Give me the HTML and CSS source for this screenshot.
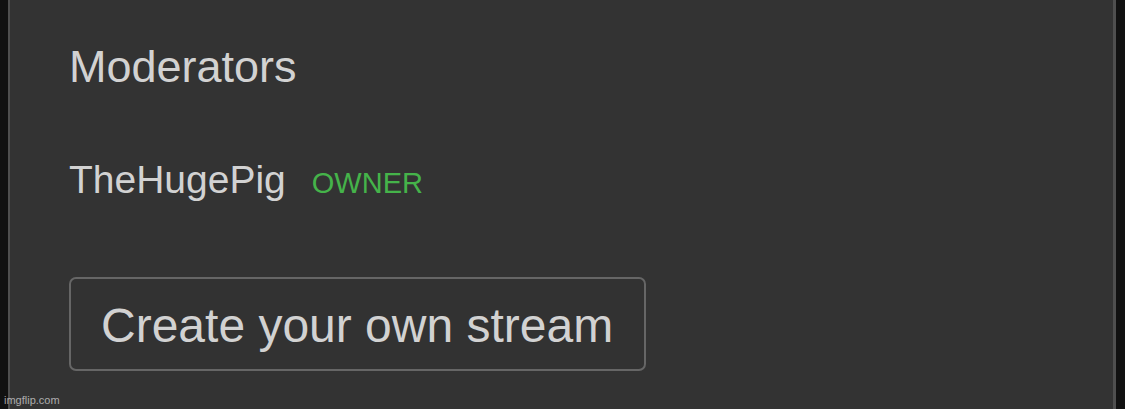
FILE: index.html
```html
<!DOCTYPE html>
<html lang="en">
<head>
<meta charset="utf-8">
<title>Moderators</title>
<link rel="stylesheet" href="styles.css">
</head>
<body>
<div class="frame">
  <section class="panel">
    <h2 class="title">Moderators</h2>
    <div class="mod-row">
      <span class="mod-name">TheHugePig</span>
      <span class="mod-role">OWNER</span>
    </div>
    <button class="create-btn" type="button">Create your own stream</button>
  </section>
</div>
<div class="watermark">imgflip.com</div>
</body>
</html>
```

FILE: styles.css
```css
html, body {
  margin: 0;
  padding: 0;
}
body {
  width: 1125px;
  height: 409px;
  overflow: hidden;
  background: #111111;
  font-family: "Liberation Sans", Arial, sans-serif;
  position: relative;
}
.frame {
  display: flex;
  height: 409px;
  padding: 0 9px 0 8px;
  box-sizing: border-box;
}
.panel {
  flex: 1;
  background: #333333;
  border-left: 2px solid #4f4f4f;
  border-right: 3px solid #4f4f4f;
  padding: 44px 0 0 59px;
  display: flex;
  flex-direction: column;
  align-items: flex-start;
}
.title {
  margin: 0;
  font-size: 45px;
  line-height: 45px;
  font-weight: normal;
  color: #d2d2d2;
}
.mod-row {
  margin-top: 71px;
  display: flex;
  align-items: baseline;
  gap: 26px;
}
.mod-name {
  font-size: 39px;
  line-height: 39px;
  color: #d2d2d2;
}
.mod-role {
  font-size: 29px;
  line-height: 29px;
  color: #45b34a;
}
.create-btn {
  margin-top: 78px;
  font-family: "Liberation Sans", Arial, sans-serif;
  font-size: 48px;
  line-height: 48px;
  color: #d2d2d2;
  background: #323232;
  border: 2px solid #666666;
  border-radius: 7px;
  padding: 23px 31px 19px 30px;
  white-space: nowrap;
}
.watermark {
  position: absolute;
  left: 4px;
  bottom: 3px;
  font-size: 11px;
  line-height: 11px;
  color: rgba(255, 255, 255, 0.6);
}
```
